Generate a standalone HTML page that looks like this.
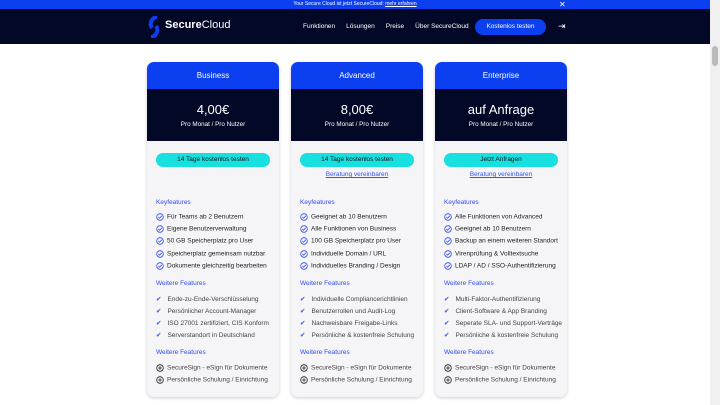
<!DOCTYPE html><html><head><style>
*{margin:0;padding:0;box-sizing:border-box}
body{width:720px;height:405px;overflow:hidden;background:#fff;font-family:"Liberation Sans",sans-serif;position:relative}
.ban{position:absolute;left:0;top:0;width:710px;height:9px;background:#0b3ff0;color:#fff;font-size:5px;text-align:center;line-height:9px}
.ban u{color:#fff}
.nav{position:absolute;left:0;top:9px;width:710px;height:35px;background:#020826;color:#fff}
.sb{position:absolute;right:0;top:0;width:10px;height:405px;background:#f0f0f0}
.sb i{position:absolute;left:2px;top:46px;width:6px;height:20px;background:#bbb;border-radius:3px}
.card{position:absolute;top:62px;width:132px;height:335px;background:#f5f5f7;border-radius:7px;box-shadow:0 1px 3px rgba(0,0,0,.2);overflow:hidden;font-size:6.5px;color:#222}
.h{height:27px;background:#0b3ff0;color:#fff;text-align:center;line-height:27px;font-size:8px}
.p{height:52px;background:#020826;color:#fff;text-align:center}
.p b{display:block;font-size:13px;font-weight:normal;padding-top:13px;line-height:15px;margin-bottom:4px}
.p span{font-size:6.3px}
.btn{position:absolute;left:9px;top:91px;width:114px;height:14px;background:#18e0e0;border-radius:7px;text-align:center;line-height:14px;font-size:6.5px;color:#111}
.lk{position:absolute;left:0;width:132px;top:109px;text-align:center;color:#3355ee;text-decoration:underline;font-size:6.5px}
.t{position:absolute;left:9px;color:#2f4cf0;font-size:6.5px}
.it{position:absolute;left:9px;white-space:nowrap}
.ic{display:inline-block;width:8px;height:8px;vertical-align:middle;margin-right:3px}
</style></head><body>
<div class="ban">Your Secure Cloud ist jetzt SecureCloud: <u>mehr erfahren</u><span style="position:absolute;left:559px;font-size:8px">✕</span></div>
<div class="nav">
<svg style="position:absolute;left:147px;top:7px" width="14" height="22" viewBox="0 0 14 22"><path d="M10 1 A7 7 0 0 0 5 12" stroke="#0b3ff0" stroke-width="4" fill="none"/><path d="M4 21 A7 7 0 0 0 9 10" stroke="#0b3ff0" stroke-width="4" fill="none"/></svg>
<div style="position:absolute;left:165px;top:10px;font-size:11px;font-weight:bold">Secure<span style="font-weight:normal">Cloud</span></div>
<div style="position:absolute;left:303px;top:14px;font-size:6.5px">Funktionen<span style="margin-left:11px">Lösungen</span><span style="margin-left:11px">Preise</span><span style="margin-left:11px">Über SecureCloud</span></div>
<div style="position:absolute;left:475px;top:10px;width:71px;height:16px;background:#0b3ff0;border-radius:8px;font-size:6.5px;text-align:center;line-height:16px">Kostenlos testen</div>
<div style="position:absolute;left:558px;top:12px;font-size:9px">⇥</div>
</div>
<div class="sb"><i></i></div>

<div class="card" style="left:147px"><div class="h">Business</div><div class="p"><b>4,00€</b><span>Pro Monat / Pro Nutzer</span></div>
<div class="btn">14 Tage kostenlos testen</div>
<div class="t" style="top:137px">Keyfeatures</div>
<div class="it" style="top:151px"><svg class="ic" viewBox="0 0 8 8"><circle cx="4" cy="4" r="3.3" fill="none" stroke="#2f4cf0" stroke-width=".8"/><path d="M2.4 4l1.2 1.2L5.8 2.8" fill="none" stroke="#2f4cf0" stroke-width=".8"/></svg>Für Teams ab 2 Benutzern</div>
<div class="it" style="top:163px"><svg class="ic" viewBox="0 0 8 8"><circle cx="4" cy="4" r="3.3" fill="none" stroke="#2f4cf0" stroke-width=".8"/><path d="M2.4 4l1.2 1.2L5.8 2.8" fill="none" stroke="#2f4cf0" stroke-width=".8"/></svg>Eigene Benutzerverwaltung</div>
<div class="it" style="top:175px"><svg class="ic" viewBox="0 0 8 8"><circle cx="4" cy="4" r="3.3" fill="none" stroke="#2f4cf0" stroke-width=".8"/><path d="M2.4 4l1.2 1.2L5.8 2.8" fill="none" stroke="#2f4cf0" stroke-width=".8"/></svg>50 GB Speicherplatz pro User</div>
<div class="it" style="top:188px"><svg class="ic" viewBox="0 0 8 8"><circle cx="4" cy="4" r="3.3" fill="none" stroke="#2f4cf0" stroke-width=".8"/><path d="M2.4 4l1.2 1.2L5.8 2.8" fill="none" stroke="#2f4cf0" stroke-width=".8"/></svg>Speicherplatz gemeinsam nutzbar</div>
<div class="it" style="top:200px"><svg class="ic" viewBox="0 0 8 8"><circle cx="4" cy="4" r="3.3" fill="none" stroke="#2f4cf0" stroke-width=".8"/><path d="M2.4 4l1.2 1.2L5.8 2.8" fill="none" stroke="#2f4cf0" stroke-width=".8"/></svg>Dokumente gleichzeitig bearbeiten</div>
<div class="t" style="top:218px">Weitere Features</div>
<div class="it" style="top:233px;color:#444"><span style="color:#2f4cf0;margin-right:6px">✔</span>Ende-zu-Ende-Verschlüsselung</div>
<div class="it" style="top:245px;color:#444"><span style="color:#2f4cf0;margin-right:6px">✔</span>Persönlicher Account-Manager</div>
<div class="it" style="top:257px;color:#444"><span style="color:#2f4cf0;margin-right:6px">✔</span>ISO 27001 zertifiziert, CIS Konform</div>
<div class="it" style="top:269px;color:#444"><span style="color:#2f4cf0;margin-right:6px">✔</span>Serverstandort in Deutschland</div>
<div class="t" style="top:287px">Weitere Features</div>
<div class="it" style="top:302px;color:#444"><svg class="ic" viewBox="0 0 8 8"><circle cx="4" cy="4" r="3.3" fill="none" stroke="#222" stroke-width=".8"/><path d="M4 2.2v3.6M2.2 4h3.6" stroke="#222" stroke-width=".8"/></svg>SecureSign - eSign für Dokumente</div>
<div class="it" style="top:314px;color:#444"><svg class="ic" viewBox="0 0 8 8"><circle cx="4" cy="4" r="3.3" fill="none" stroke="#222" stroke-width=".8"/><path d="M4 2.2v3.6M2.2 4h3.6" stroke="#222" stroke-width=".8"/></svg>Persönliche Schulung / Einrichtung</div>
</div>

<div class="card" style="left:291px"><div class="h">Advanced</div><div class="p"><b>8,00€</b><span>Pro Monat / Pro Nutzer</span></div>
<div class="btn">14 Tage kostenlos testen</div><div class="lk">Beratung vereinbaren</div>
<div class="t" style="top:137px">Keyfeatures</div>
<div class="it" style="top:151px"><svg class="ic" viewBox="0 0 8 8"><circle cx="4" cy="4" r="3.3" fill="none" stroke="#2f4cf0" stroke-width=".8"/><path d="M2.4 4l1.2 1.2L5.8 2.8" fill="none" stroke="#2f4cf0" stroke-width=".8"/></svg>Geeignet ab 10 Benutzern</div>
<div class="it" style="top:163px"><svg class="ic" viewBox="0 0 8 8"><circle cx="4" cy="4" r="3.3" fill="none" stroke="#2f4cf0" stroke-width=".8"/><path d="M2.4 4l1.2 1.2L5.8 2.8" fill="none" stroke="#2f4cf0" stroke-width=".8"/></svg>Alle Funktionen von Business</div>
<div class="it" style="top:175px"><svg class="ic" viewBox="0 0 8 8"><circle cx="4" cy="4" r="3.3" fill="none" stroke="#2f4cf0" stroke-width=".8"/><path d="M2.4 4l1.2 1.2L5.8 2.8" fill="none" stroke="#2f4cf0" stroke-width=".8"/></svg>100 GB Speicherplatz pro User</div>
<div class="it" style="top:188px"><svg class="ic" viewBox="0 0 8 8"><circle cx="4" cy="4" r="3.3" fill="none" stroke="#2f4cf0" stroke-width=".8"/><path d="M2.4 4l1.2 1.2L5.8 2.8" fill="none" stroke="#2f4cf0" stroke-width=".8"/></svg>Individuelle Domain / URL</div>
<div class="it" style="top:200px"><svg class="ic" viewBox="0 0 8 8"><circle cx="4" cy="4" r="3.3" fill="none" stroke="#2f4cf0" stroke-width=".8"/><path d="M2.4 4l1.2 1.2L5.8 2.8" fill="none" stroke="#2f4cf0" stroke-width=".8"/></svg>Individuelles Branding / Design</div>
<div class="t" style="top:218px">Weitere Features</div>
<div class="it" style="top:233px;color:#444"><span style="color:#2f4cf0;margin-right:6px">✔</span>Individuelle Compliancerichtlinien</div>
<div class="it" style="top:245px;color:#444"><span style="color:#2f4cf0;margin-right:6px">✔</span>Benutzerrollen und Audit-Log</div>
<div class="it" style="top:257px;color:#444"><span style="color:#2f4cf0;margin-right:6px">✔</span>Nachweisbare Freigabe-Links</div>
<div class="it" style="top:269px;color:#444"><span style="color:#2f4cf0;margin-right:6px">✔</span>Persönliche &amp; kostenfreie Schulung</div>
<div class="t" style="top:287px">Weitere Features</div>
<div class="it" style="top:302px;color:#444"><svg class="ic" viewBox="0 0 8 8"><circle cx="4" cy="4" r="3.3" fill="none" stroke="#222" stroke-width=".8"/><path d="M4 2.2v3.6M2.2 4h3.6" stroke="#222" stroke-width=".8"/></svg>SecureSign - eSign für Dokumente</div>
<div class="it" style="top:314px;color:#444"><svg class="ic" viewBox="0 0 8 8"><circle cx="4" cy="4" r="3.3" fill="none" stroke="#222" stroke-width=".8"/><path d="M4 2.2v3.6M2.2 4h3.6" stroke="#222" stroke-width=".8"/></svg>Persönliche Schulung / Einrichtung</div>
</div>

<div class="card" style="left:435px"><div class="h">Enterprise</div><div class="p"><b>auf Anfrage</b><span>Pro Monat / Pro Nutzer</span></div>
<div class="btn">Jetzt Anfragen</div><div class="lk">Beratung vereinbaren</div>
<div class="t" style="top:137px">Keyfeatures</div>
<div class="it" style="top:151px"><svg class="ic" viewBox="0 0 8 8"><circle cx="4" cy="4" r="3.3" fill="none" stroke="#2f4cf0" stroke-width=".8"/><path d="M2.4 4l1.2 1.2L5.8 2.8" fill="none" stroke="#2f4cf0" stroke-width=".8"/></svg>Alle Funktionen von Advanced</div>
<div class="it" style="top:163px"><svg class="ic" viewBox="0 0 8 8"><circle cx="4" cy="4" r="3.3" fill="none" stroke="#2f4cf0" stroke-width=".8"/><path d="M2.4 4l1.2 1.2L5.8 2.8" fill="none" stroke="#2f4cf0" stroke-width=".8"/></svg>Geeignet ab 10 Benutzern</div>
<div class="it" style="top:175px"><svg class="ic" viewBox="0 0 8 8"><circle cx="4" cy="4" r="3.3" fill="none" stroke="#2f4cf0" stroke-width=".8"/><path d="M2.4 4l1.2 1.2L5.8 2.8" fill="none" stroke="#2f4cf0" stroke-width=".8"/></svg>Backup an einem weiteren Standort</div>
<div class="it" style="top:188px"><svg class="ic" viewBox="0 0 8 8"><circle cx="4" cy="4" r="3.3" fill="none" stroke="#2f4cf0" stroke-width=".8"/><path d="M2.4 4l1.2 1.2L5.8 2.8" fill="none" stroke="#2f4cf0" stroke-width=".8"/></svg>Virenprüfung &amp; Volltextsuche</div>
<div class="it" style="top:200px"><svg class="ic" viewBox="0 0 8 8"><circle cx="4" cy="4" r="3.3" fill="none" stroke="#2f4cf0" stroke-width=".8"/><path d="M2.4 4l1.2 1.2L5.8 2.8" fill="none" stroke="#2f4cf0" stroke-width=".8"/></svg>LDAP / AD / SSO-Authentifizierung</div>
<div class="t" style="top:218px">Weitere Features</div>
<div class="it" style="top:233px;color:#444"><span style="color:#2f4cf0;margin-right:6px">✔</span>Multi-Faktor-Authentifizierung</div>
<div class="it" style="top:245px;color:#444"><span style="color:#2f4cf0;margin-right:6px">✔</span>Client-Software &amp; App Branding</div>
<div class="it" style="top:257px;color:#444"><span style="color:#2f4cf0;margin-right:6px">✔</span>Seperate SLA- und Support-Verträge</div>
<div class="it" style="top:269px;color:#444"><span style="color:#2f4cf0;margin-right:6px">✔</span>Persönliche &amp; kostenfreie Schulung</div>
<div class="t" style="top:287px">Weitere Features</div>
<div class="it" style="top:302px;color:#444"><svg class="ic" viewBox="0 0 8 8"><circle cx="4" cy="4" r="3.3" fill="none" stroke="#222" stroke-width=".8"/><path d="M4 2.2v3.6M2.2 4h3.6" stroke="#222" stroke-width=".8"/></svg>SecureSign - eSign für Dokumente</div>
<div class="it" style="top:314px;color:#444"><svg class="ic" viewBox="0 0 8 8"><circle cx="4" cy="4" r="3.3" fill="none" stroke="#222" stroke-width=".8"/><path d="M4 2.2v3.6M2.2 4h3.6" stroke="#222" stroke-width=".8"/></svg>Persönliche Schulung / Einrichtung</div>
</div>
</body></html>
